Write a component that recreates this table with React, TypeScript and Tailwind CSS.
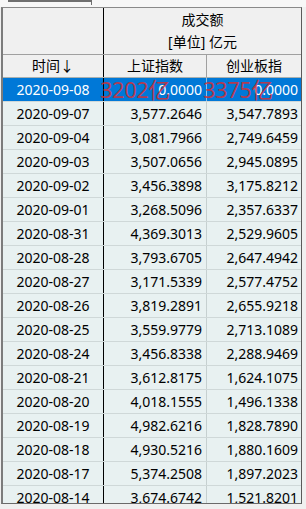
import React from "react";

type Row = { date: string; sh: string; cy: string };

const rows: Row[] = [
  { date: "2020-09-08", sh: "0.0000", cy: "0.0000" },
  { date: "2020-09-07", sh: "3,577.2646", cy: "3,547.7893" },
  { date: "2020-09-04", sh: "3,081.7966", cy: "2,749.6459" },
  { date: "2020-09-03", sh: "3,507.0656", cy: "2,945.0895" },
  { date: "2020-09-02", sh: "3,456.3898", cy: "3,175.8212" },
  { date: "2020-09-01", sh: "3,268.5096", cy: "2,357.6337" },
  { date: "2020-08-31", sh: "4,369.3013", cy: "2,529.9605" },
  { date: "2020-08-28", sh: "3,793.6705", cy: "2,647.4942" },
  { date: "2020-08-27", sh: "3,171.5339", cy: "2,577.4752" },
  { date: "2020-08-26", sh: "3,819.2891", cy: "2,655.9218" },
  { date: "2020-08-25", sh: "3,559.9779", cy: "2,713.1089" },
  { date: "2020-08-24", sh: "3,456.8338", cy: "2,288.9469" },
  { date: "2020-08-21", sh: "3,612.8175", cy: "1,624.1075" },
  { date: "2020-08-20", sh: "4,018.1555", cy: "1,496.1338" },
  { date: "2020-08-19", sh: "4,982.6216", cy: "1,828.7890" },
  { date: "2020-08-18", sh: "4,930.5216", cy: "1,880.1609" },
  { date: "2020-08-17", sh: "5,374.2508", cy: "1,897.2023" },
  { date: "2020-08-14", sh: "3,674.6742", cy: "1,521.8201" },
];

function App() {
  return (
    <div
      className="w-[306px] h-[509px] bg-[#f0f0f0] overflow-hidden text-[14px] text-black"
      style={{ fontFamily: '"Noto Sans", "Noto Sans CJK SC", sans-serif' }}
    >
      {/* tab strip */}
      <div className="h-[7px] bg-[#f7f7f7]">
        <div className="ml-[8px] w-[84px] h-[5px] border-t-2 border-r border-[#6f6f6f]" />
      </div>

      {/* table */}
      <div className="ml-[1px] w-[301px] h-[497px] border-l-2 border-t border-r border-b border-t-[#8a8a8a] border-l-[#7c7c7c] border-r-[#5a5a5a] border-b-[#6a6a6a] overflow-hidden bg-[#f0f0f0]">
        <div className="grid grid-cols-[101px_197px] h-[47px] border-b border-[#a0a0a0]">
          <div className="border-r border-black" />
          <div className="flex flex-col items-center leading-[22px] pt-[1px]">
            <span>成交额</span>
            <span>[单位] 亿元</span>
          </div>
        </div>
        <div className="grid grid-cols-[101px_103px_94px] h-[23px] border-b border-[#a8b0b0] leading-[22px] text-center">
          <div className="border-r border-black">时间↓</div>
          <div className="border-r border-[#a0a0a0]">上证指数</div>
          <div>创业板指</div>
        </div>

        {rows.map((r, i) => {
          const sel = i === 0;
          return (
            <div
              key={r.date}
              className={
                sel
                  ? "relative grid grid-cols-[101px_103px_94px] h-[24px] border-b border-[#cfd8d8] bg-[#0078d7] text-white leading-[23px]"
                  : "grid grid-cols-[101px_103px_94px] h-[24px] border-b border-[#cfd8d8] bg-[#e8f1f1] leading-[23px]"
              }
            >
              <div className="border-r border-black text-center">{r.date}</div>
              <div
                className={
                  sel
                    ? "border-r border-[#8ec0ea] text-right pr-[4px]"
                    : "border-r border-[#c6d0d0] text-right pr-[4px]"
                }
              >
                {r.sh}
              </div>
              <div className="text-right pr-[3px]">{r.cy}</div>
              {sel && (
                <>
                  <span className="absolute left-[97px] top-[-2px] text-[22px] leading-[26px] text-[#d0303a]/85 tracking-[-0.5px]">
                    3202亿
                  </span>
                  <span className="absolute left-[200px] top-[-2px] text-[22px] leading-[26px] text-[#d0303a]/85 tracking-[-0.5px]">
                    3375亿
                  </span>
                </>
              )}
            </div>
          );
        })}
      </div>
    </div>
  );
}

export default App;
